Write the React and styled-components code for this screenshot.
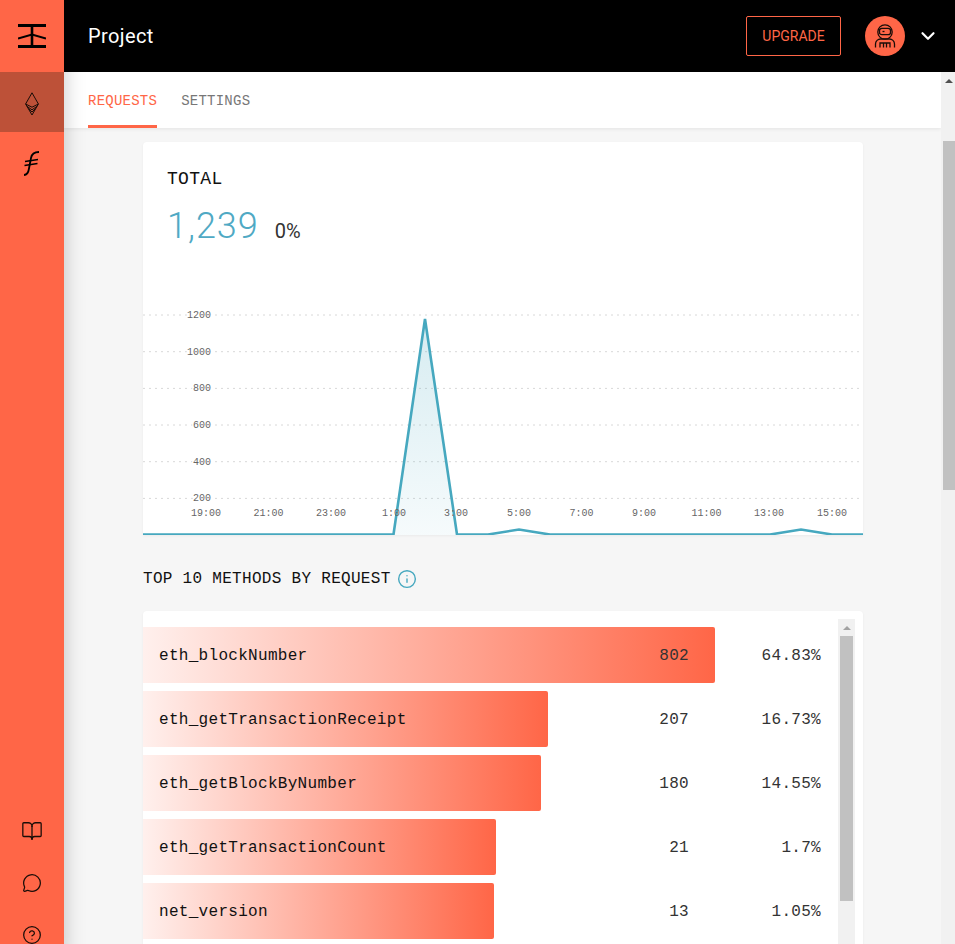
import React from 'react'
import styled, { createGlobalStyle } from 'styled-components'
import { BookOpen, MessageCircle, CircleHelp, ChevronDown, Info } from 'lucide-react'

const ORANGE = '#ff6647'
const TEAL = '#46a8bf'
const MONO = '"Liberation Mono", "DejaVu Sans Mono", monospace'

const methods = [
  { name: 'eth_blockNumber', count: 802, share: '64.83%', width: 572 },
  { name: 'eth_getTransactionReceipt', count: 207, share: '16.73%', width: 405 },
  { name: 'eth_getBlockByNumber', count: 180, share: '14.55%', width: 398 },
  { name: 'eth_getTransactionCount', count: 21, share: '1.7%', width: 353 },
  { name: 'net_version', count: 13, share: '1.05%', width: 351 },
]

const yLabels = [
  ['1200', 315],
  ['1000', 351.7],
  ['800', 388.4],
  ['600', 425],
  ['400', 461.7],
  ['200', 498.4],
]

const xLabels = [
  ['19:00', 206],
  ['21:00', 268.5],
  ['23:00', 331],
  ['1:00', 394],
  ['3:00', 456],
  ['5:00', 519],
  ['7:00', 581.5],
  ['9:00', 644],
  ['11:00', 706.5],
  ['13:00', 769],
  ['15:00', 832],
]

const GlobalStyle = createGlobalStyle`
  html, body {
    margin: 0;
    height: 100%;
    overflow: hidden;
    background: #f6f6f6;
    font-family: Roboto, sans-serif;
  }
  * { box-sizing: border-box; }
`

export default function App() {
  return (
    <Page>
      <GlobalStyle />
      <Sidebar>
        <LogoCell>
          <svg width="28" height="24" viewBox="0 0 28 24" fill="none" stroke="#000">
            <path d="M0 1.5h28M0 22.5h28" strokeWidth="3" />
            <path d="M14 2v20" strokeWidth="2.6" />
            <path d="M0 14.5 14 10.5 28 14.5" strokeWidth="2" />
          </svg>
        </LogoCell>
        <NavCell $active>
          <svg width="14" height="24" viewBox="0 0 14 24" fill="none" stroke="#1a0d08" strokeWidth="1">
            <path d="M7 .8 13.4 12 7 23 .6 12Z" />
            <path d="M.6 12 7 15.2 13.4 12M1.8 14.2 7 17.8 12.2 14.2" />
            <path d="M3.4 16.5 7 20 10.6 16.5" />
          </svg>
        </NavCell>
        <NavCell>
          <svg width="18" height="25" viewBox="0 0 18 25" fill="none" stroke="#000">
            <path d="M1 24c3.6 0 4.4-2.4 5-6.5L8 7c.6-3.4 2-6 8-6" strokeWidth="1.8" />
            <path d="M2 10.5 15 8.5M1.5 14.5 14.5 12.5" strokeWidth="1.4" />
          </svg>
        </NavCell>
        <SideSpacer />
        <HelpCell><BookOpen size={22} strokeWidth={1.4} /></HelpCell>
        <HelpCell><MessageCircle size={20} strokeWidth={1.5} /></HelpCell>
        <HelpCell><CircleHelp size={20} strokeWidth={1.5} /></HelpCell>
      </Sidebar>

      <Main>
        <TopBar>
          <Title>Project</Title>
          <UpgradeButton>UPGRADE</UpgradeButton>
          <Avatar>
            <svg width="22" height="24" viewBox="0 0 22 24" fill="none" stroke="#1a0d08" strokeWidth="1.3">
              <circle cx="11" cy="8" r="7.2" />
              <path d="M5.5 6.5c0-1.4 1-2.2 2.4-2.2h6.2c1.4 0 2.4.8 2.4 2.2v2c0 1.4-1 2.2-2.4 2.2H7.9c-1.4 0-2.4-.8-2.4-2.2Z" />
              <path d="M8.5 7.5h2" />
              <path d="M1.5 23.5v-3.5c0-3 2.5-5 5-5h9c2.5 0 5 2 5 5v3.5" />
              <path d="M6 23.5V19h10v4.5M9.5 19v4.5M12.5 19v4.5" />
            </svg>
          </Avatar>
          <Chevron><ChevronDown size={22} strokeWidth={2.4} /></Chevron>
        </TopBar>

        <Viewport>
          <Column>
            <TabBar>
              <Tab $active>REQUESTS</Tab>
              <Tab>SETTINGS</Tab>
            </TabBar>

            <Content>
              <ChartCard>
                <CardHead>
                  <CardLabel>TOTAL</CardLabel>
                  <Totals>
                    <BigNumber>1,239</BigNumber>
                    <Delta>0%</Delta>
                  </Totals>
                </CardHead>
                <ChartSvg width="720" height="289" viewBox="143 246 720 289">
                  <defs>
                    <linearGradient id="areaFill" x1="0" y1="0" x2="0" y2="1">
                      <stop offset="0" stopColor={TEAL} stopOpacity="0.22" />
                      <stop offset="1" stopColor={TEAL} stopOpacity="0.05" />
                    </linearGradient>
                  </defs>
                  {yLabels.map(([label, y]) => (
                    <line key={label} x1="143" x2="863" y1={y} y2={y} stroke="#d8d8d8" strokeWidth="1" strokeDasharray="2 4" />
                  ))}
                  <path d="M393.5 535 425 319 457 535Z" fill="url(#areaFill)" />
                  <path
                    d="M143 534.5H393.5L425 319 457 534.5H488L519 529.5 550 534.5H770L801 529.5 832 534.5H863"
                    fill="none"
                    stroke={TEAL}
                    strokeWidth="2.6"
                  />
                  {yLabels.map(([label, y]) => (
                    <AxisText key={label} x="211" y={y + 3} textAnchor="end" stroke="#fff" strokeWidth="3" paintOrder="stroke">{label}</AxisText>
                  ))}
                  {xLabels.map(([label, x]) => (
                    <AxisText key={label} x={x} y="515.5" textAnchor="middle">{label}</AxisText>
                  ))}
                </ChartSvg>
              </ChartCard>

              <SectionTitle>
                TOP 10 METHODS BY REQUEST
                <InfoIcon><Info size={20} strokeWidth={1.7} /></InfoIcon>
              </SectionTitle>

              <ListCard>
                <Rows>
                  {methods.map((m) => (
                    <Row key={m.name}>
                      <Bar style={{ width: m.width }} />
                      <MethodName>{m.name}</MethodName>
                      <Count>{m.count}</Count>
                      <Share>{m.share}</Share>
                    </Row>
                  ))}
                </Rows>
                <ListScrollbar>
                  <ListArrow />
                  <ListThumb />
                </ListScrollbar>
              </ListCard>
            </Content>
          </Column>

          <PageScrollbar>
            <PageArrow />
            <PageThumb />
          </PageScrollbar>
        </Viewport>
      </Main>
    </Page>
  )
}

const Page = styled.div`
  display: flex;
  align-items: flex-start;
  width: 955px;
  height: 944px;
  overflow: hidden;
`

const Sidebar = styled.nav`
  position: relative;
  z-index: 2;
  flex: 0 0 64px;
  height: 961px;
  display: flex;
  flex-direction: column;
  background: ${ORANGE};
  box-shadow: 0 0 20px rgba(0, 0, 0, 0.22);
`

const LogoCell = styled.div`
  flex: 0 0 72px;
  display: flex;
  align-items: center;
  justify-content: center;
`

const NavCell = styled.div`
  flex: 0 0 60px;
  display: flex;
  align-items: center;
  justify-content: center;
  padding-top: 3px;
  background: ${(p) => (p.$active ? '#bd5138' : 'transparent')};
`

const SideSpacer = styled.div`
  flex: 1;
`

const HelpCell = styled.div`
  flex: 0 0 52px;
  display: flex;
  align-items: center;
  justify-content: center;
  color: #1a0d08;
`

const Main = styled.div`
  flex: 1;
  min-width: 0;
  height: 944px;
  display: flex;
  flex-direction: column;
`

const TopBar = styled.header`
  flex: 0 0 72px;
  display: flex;
  align-items: center;
  padding: 0 16px 0 24px;
  background: #000;
`

const Title = styled.div`
  flex: 1;
  color: #fff;
  font-size: 20px;
  font-weight: 400;
  letter-spacing: 0.4px;
`

const UpgradeButton = styled.button`
  width: 95px;
  height: 40px;
  padding: 0;
  background: transparent;
  border: 1px solid ${ORANGE};
  border-radius: 2px;
  color: ${ORANGE};
  font-family: Roboto, sans-serif;
  font-size: 14px;
`

const Avatar = styled.div`
  width: 40px;
  height: 40px;
  margin-left: 24px;
  display: flex;
  align-items: center;
  justify-content: center;
  border-radius: 50%;
  background: ${ORANGE};
`

const Chevron = styled.div`
  margin-left: 12px;
  display: flex;
  color: #fff;
`

const Viewport = styled.div`
  flex: 1;
  min-height: 0;
  display: flex;
`

const Column = styled.div`
  flex: 1;
  min-width: 0;
  overflow: hidden;
`

const TabBar = styled.div`
  height: 56px;
  display: flex;
  gap: 24px;
  padding-left: 24px;
  background: #fff;
  box-shadow: 0 1px 4px rgba(0, 0, 0, 0.08);
`

const Tab = styled.div`
  height: 56px;
  display: flex;
  align-items: center;
  border-bottom: 3px solid ${(p) => (p.$active ? ORANGE : 'transparent')};
  padding-top: 5px;
  color: ${(p) => (p.$active ? ORANGE : '#777')};
  font-family: ${MONO};
  font-size: 14px;
  letter-spacing: 0.24px;
`

const Content = styled.main`
  padding: 14px 0 0 79px;
`

const ChartCard = styled.section`
  width: 720px;
  height: 393px;
  display: flex;
  flex-direction: column;
  background: #fff;
  border-radius: 4px 4px 0 0;
  box-shadow: 0 1px 3px rgba(0, 0, 0, 0.05);
`

const CardHead = styled.div`
  flex: 0 0 104px;
  min-height: 0;
  padding: 26px 24px 0;
`

const CardLabel = styled.div`
  color: #111;
  font-family: ${MONO};
  font-size: 18px;
  letter-spacing: 0.3px;
  line-height: 22px;
`

const Totals = styled.div`
  display: flex;
  align-items: baseline;
  gap: 16px;
  margin-top: 14px;
`

const BigNumber = styled.div`
  color: #4fa9c4;
  font-size: 36px;
  font-weight: 300;
  letter-spacing: 1px;
  line-height: 44px;
`

const Delta = styled.div`
  color: #333;
  font-size: 20px;
`

const ChartSvg = styled.svg`
  display: block;
  flex: 0 0 289px;
`

const AxisText = styled.text`
  font-family: ${MONO};
  font-size: 10px;
  fill: #666;
`

const SectionTitle = styled.h2`
  height: 20px;
  margin: 34px 0 22px;
  display: flex;
  align-items: center;
  gap: 6px;
  color: #111;
  font-family: ${MONO};
  font-size: 16px;
  font-weight: 400;
  letter-spacing: 0.3px;
`

const InfoIcon = styled.span`
  display: flex;
  color: ${TEAL};
`

const ListCard = styled.section`
  width: 720px;
  height: 400px;
  display: flex;
  padding: 8px 8px 0 0;
  background: #fff;
  border-radius: 4px 4px 0 0;
  box-shadow: 0 1px 3px rgba(0, 0, 0, 0.05);
`

const Rows = styled.div`
  flex: 1;
  min-width: 0;
  display: flex;
  flex-direction: column;
  gap: 8px;
  padding-top: 8px;
`

const Row = styled.div`
  position: relative;
  flex: 0 0 56px;
  display: grid;
  grid-template-columns: 1fr 60px 132px;
  align-items: center;
  padding: 1px 17px 0 16px;
  font-family: ${MONO};
  font-size: 16px;
  letter-spacing: 0.3px;
`

const Bar = styled.div`
  position: absolute;
  top: 0;
  bottom: 0;
  left: 0;
  border-radius: 0 2px 2px 0;
  background: linear-gradient(90deg, #fff0ed 0%, ${ORANGE} 100%);
`

const MethodName = styled.span`
  position: relative;
  color: #111;
`

const Count = styled.span`
  position: relative;
  color: #333;
  text-align: right;
`

const Share = styled.span`
  color: #333;
  text-align: right;
`

const ListScrollbar = styled.div`
  flex: 0 0 17px;
  display: flex;
  flex-direction: column;
  align-items: center;
  background: #f1f1f1;
`

const ListArrow = styled.div`
  flex: 0 0 auto;
  margin: 7px 0 6px;
  border-left: 4px solid transparent;
  border-right: 4px solid transparent;
  border-bottom: 4px solid #a3a3a3;
`

const ListThumb = styled.div`
  width: 13px;
  height: 265px;
  background: #c1c1c1;
`

const PageScrollbar = styled.div`
  flex: 0 0 14px;
  display: flex;
  flex-direction: column;
  align-items: flex-end;
  background: #f1f1f1;
`

const PageArrow = styled.div`
  margin: 7px 2px 58px 0;
  border-left: 4px solid transparent;
  border-right: 4px solid transparent;
  border-bottom: 4px solid #505050;
`

const PageThumb = styled.div`
  width: 12px;
  height: 349px;
  background: #c1c1c1;
`
